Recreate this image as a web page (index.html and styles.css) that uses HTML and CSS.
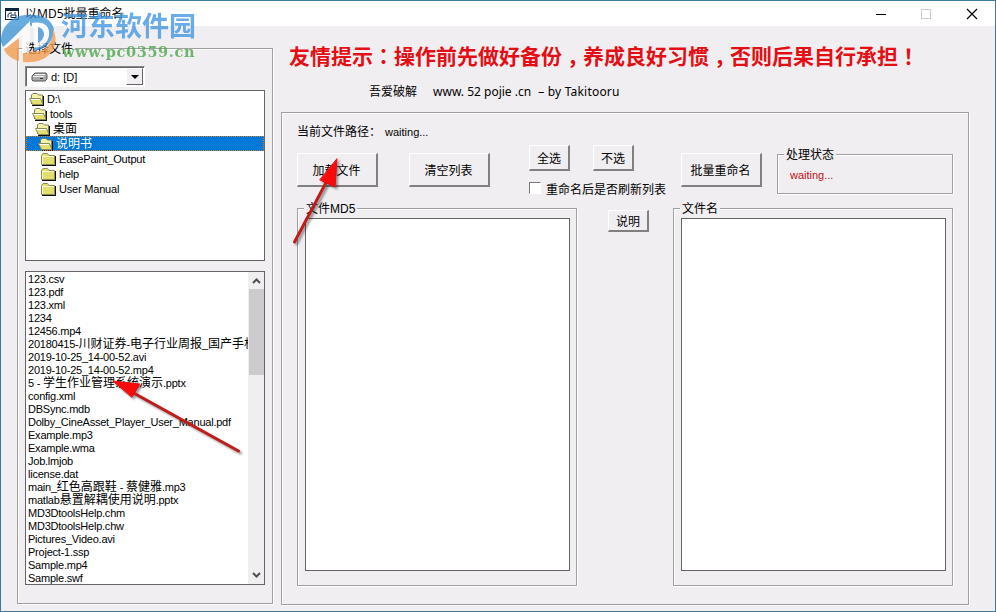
FILE: index.html
```html
<!DOCTYPE html>
<html lang="zh-CN">

<head>
    <meta charset="UTF-8">
    <meta name="viewport" content="width=device-width, initial-scale=1.0">
    <title>以MD5批量重命名</title>
    <link rel="stylesheet" href="styles.css">
</head>

<body>
    <!-- shared icons -->
    <svg class="defs" width="0" height="0">
        <symbol id="folder-open" viewBox="0 0 16 13">
            <path d="M2.500 11V2L4 .500h4L9.500 2h4V11" fill="#f5f2a8" stroke="#7c7c5c"/>
            <path d="M.500 5.500h11L14 11.500H3.500z" fill="#e4df6e" stroke="#8a8a5a"/>
            <path d="M1.500 6.500h9.500" stroke="#fff"/>
            <path d="M3 12.500h12M14.500 12V3" fill="none" stroke="#111"/>
        </symbol>
        <symbol id="folder" viewBox="0 0 16 13">
            <path d="M.500 11.500V2.500L2 .500h4.500L8 2.500h5.500v9z" fill="#e3df6c" stroke="#8a8a5a"/>
            <path d="M1.500 11V3.500h11.500" fill="none" stroke="#fbfad8"/>
            <path d="M1 12.500h14M14.500 12V3" fill="none" stroke="#111"/>
        </symbol>
    </svg>

    <div class="window">
        <div class="titlebar">
            <svg class="app-icon" width="14" height="12" viewBox="0 0 14 12">
                <rect x=".5" y=".5" width="13" height="11" fill="#fff" stroke="#0c2440"/>
                <path d="M1 2h12" stroke="#0c2440" stroke-width="2"/>
                <path d="M3 9.500V6.500L5 5h2M6 9.500V7h5v2.500zM9 5h2" fill="none" stroke="#0c2440"/>
            </svg>
            <span class="title">以MD5批量重命名</span>
            <svg class="controls" width="104" height="12" viewBox="0 0 104 12">
                <path d="M0 6.500h10" stroke="#000"/>
                <rect x="45.500" y="1.500" width="9" height="9" fill="none" stroke="#ccc"/>
                <path d="M91 1l10 10M101 1L91 11" stroke="#000" stroke-width="1.200"/>
            </svg>
        </div>

        <div class="content">
            <div class="group left">
                <div class="legend">选择文件</div>
                <div class="drive">
                    <svg width="17" height="10" viewBox="0 0 17 10">
                        <path d="M1 4l3-3h11l1 2v4l-2 2H2L1 8z" fill="#aaa" stroke="#555"/>
                        <path d="M2 4.500h11M4 2.500h10" stroke="#eee"/>
                        <path d="M9 6.500h3" stroke="#333"/>
                    </svg>
                    <span>d: [D]</span>
                    <div class="drop"></div>
                </div>
                <ul class="dirs">
                    <li class="d0"><svg><use href="#folder-open"/></svg><span>D:\</span></li>
                    <li class="d1"><svg><use href="#folder-open"/></svg><span>tools</span></li>
                    <li class="d2"><svg><use href="#folder-open"/></svg><span class="cn">桌面</span></li>
                    <li class="d3 selected"><svg><use href="#folder-open"/></svg><span class="cn">说明书</span></li>
                    <li class="d4"><svg><use href="#folder"/></svg><span>EasePaint_Output</span></li>
                    <li class="d4"><svg><use href="#folder"/></svg><span>help</span></li>
                    <li class="d4"><svg><use href="#folder"/></svg><span>User Manual</span></li>
                </ul>
                <div class="files">
                    <ul>
                        <li>123.csv</li>
                        <li>123.pdf</li>
                        <li>123.xml</li>
                        <li>1234</li>
                        <li>12456.mp4</li>
                        <li>20180415-<span class="cn">川财证券</span>-<span class="cn">电子行业周报</span>_<span class="cn">国产手机</span></li>
                        <li>2019-10-25_14-00-52.avi</li>
                        <li>2019-10-25_14-00-52.mp4</li>
                        <li>5 - <span class="cn">学生作业管理系统演示</span>.pptx</li>
                        <li>config.xml</li>
                        <li>DBSync.mdb</li>
                        <li>Dolby_CineAsset_Player_User_Manual.pdf</li>
                        <li>Example.mp3</li>
                        <li>Example.wma</li>
                        <li>Job.lmjob</li>
                        <li>license.dat</li>
                        <li>main_<span class="cn">红色高跟鞋</span> - <span class="cn">蔡健雅</span>.mp3</li>
                        <li>matlab<span class="cn">悬置解耦使用说明</span>.pptx</li>
                        <li>MD3DtoolsHelp.chm</li>
                        <li>MD3DtoolsHelp.chw</li>
                        <li>Pictures_Video.avi</li>
                        <li>Project-1.ssp</li>
                        <li>Sample.mp4</li>
                        <li>Sample.swf</li>
                    </ul>
                    <div class="scrollbar">
                        <svg width="9" height="6" viewBox="0 0 9 6"><path d="M1 5l3.500-3.500L8 5" /></svg>
                        <div class="thumb"></div>
                        <svg width="9" height="6" viewBox="0 0 9 6"><path d="M1 1l3.500 3.500L8 1" /></svg>
                    </div>
                </div>
            </div>

            <div class="main">
                <h1>友情提示<i lang="zh-TW">：</i>操作前先做好备份<span class="comma">，</span>养成良好习惯<span class="comma">，</span>否则后果自行承担<i lang="zh-TW">！</i></h1>
                <div class="credit"><span class="forum">吾爱破解</span><span class="site">www. 52 pojie .cn</span><span class="by">– by Takitooru</span></div>

                <div class="group panel">
                    <div class="path"><span>当前文件路径：</span><span class="waiting">waiting...</span></div>
                    <div class="toolbar">
                        <button class="load">加载文件</button>
                        <button class="clear">清空列表</button>
                        <div class="select">
                            <div class="pair">
                                <button>全选</button>
                                <button>不选</button>
                            </div>
                            <label><span class="check"></span>重命名后是否刷新列表</label>
                        </div>
                        <button class="rename">批量重命名</button>
                        <div class="group status">
                            <div class="legend">处理状态</div>
                            <div class="waiting">waiting...</div>
                        </div>
                    </div>
                    <div class="lists">
                        <div class="group list">
                            <div class="legend">文件MD5</div>
                            <div class="box"></div>
                        </div>
                        <button class="help">说明</button>
                        <div class="group list">
                            <div class="legend">文件名</div>
                            <div class="box"></div>
                        </div>
                    </div>
                </div>
            </div>
        </div>
    </div>

    <div class="watermark">
        <svg width="58" height="52" viewBox="0 0 58 52">
            <path d="M1 30C1 14 12 4 26 3c14-1 25 3 28 14 0 12-8 20-20 22V15l-5-2L3 35z" fill="#3b93d6"/>
            <path d="M4 37l15-11v23C12 47 6 43 4 37z" fill="#f39a4a"/>
            <path d="M23 50V24h3l3 1v14c14 3 25-6 24-22 8 16-3 36-30 33z" fill="#f39a4a"/>
            <path d="M4 35L30 9v5l-1 27h-7V23L6 36zM32 11c12-2 18 3 17 12-1 8-6 12-15 13V16h-2zM38 15v16c8-4 8-14 0-16z" fill="#fff" fill-rule="evenodd"/>
        </svg>
        <div class="brand">
            <div class="name">河东软件园</div>
            <div class="url">www.pc0359.cn</div>
        </div>
    </div>

    <svg class="arrows" width="996" height="612" viewBox="0 0 996 612">
        <path d="M294.500 242L329 177" />
        <path class="head" d="M337 159L335 187L320 180z" />
        <path d="M238.500 451L130 391" />
        <path class="head" d="M113 381L140 384L132 397z" />
    </svg>
</body>

</html>
```
FILE: styles.css
```css
* {
    box-sizing: border-box;
}

body {
    margin: 0;
    font-family: "Liberation Sans", "Noto Sans CJK SC", sans-serif;
    font-size: 12px;
    color: #000;
}

ul {
    list-style: none;
    margin: 0;
    padding: 0;
}

.defs {
    position: absolute;
}

.window {
    width: 996px;
    height: 612px;
    border: 1px solid #3a7a9c;
    background: #f0eef1;
    overflow: hidden;
}

.titlebar {
    display: flex;
    align-items: center;
    height: 25px;
    padding: 0 15px 0 4px;
    background: #fff;
}

.title {
    flex: 1;
    margin-left: 6px;
    line-height: 24px;
    font-family: "Noto Sans", "Noto Sans CJK SC", sans-serif;
}

.content {
    display: flex;
    padding-left: 16px;
}

.group {
    border: 1px solid #a0a0a0;
    box-shadow: 1px 1px 0 #fff, inset 1px 1px 0 #fff;
}

.legend {
    width: max-content;
    height: 16px;
    margin: -8px 0 0 6px;
    padding: 0 2px;
    line-height: 17px;
    background: #f0eef1;
}

/* left column */

.left {
    width: 256px;
    height: 556px;
    margin-top: 22px;
    padding: 0 7px;
}

.left > .legend {
    margin-left: -2px;
}

.drive {
    display: flex;
    align-items: center;
    width: 120px;
    height: 21px;
    margin-top: 9px;
    padding: 0 1px 0 5px;
    border: 1px solid #888;
    border-right-color: #fff;
    border-bottom-color: #fff;
    box-shadow: inset 1px 1px 0 #666;
    background: #fff;
}

.drive span {
    flex: 1;
    margin-left: 3px;
    font-size: 11px;
}

.drop {
    display: flex;
    align-items: center;
    justify-content: center;
    width: 17px;
    height: 17px;
    border: 1px solid #fff;
    border-right-color: #666;
    border-bottom-color: #666;
    background: #f0eef1;
}

.drop::after {
    content: "";
    border: 4px solid transparent;
    border-top-color: #000;
    border-bottom: 0;
}

.dirs {
    width: 240px;
    height: 171px;
    margin-top: 3px;
    border: 1px solid #646464;
    background: #fff;
}

.dirs li {
    display: flex;
    align-items: center;
    height: 15px;
    line-height: 16px;
    font-size: 11px;
    letter-spacing: -0.2px;
    white-space: nowrap;
}

.dirs svg {
    width: 16px;
    height: 13px;
    margin: 1px 2px 0 0;
}

.dirs span {
    padding-top: 1px;
}

li .cn {
    font-size: 12px;
    letter-spacing: 0;
}

.d0 {
    padding-left: 3px;
}

.d1 {
    padding-left: 6px;
}

.d2 {
    padding-left: 9px;
}

.d3 {
    padding-left: 12px;
}

.d4 {
    padding-left: 15px;
}

.dirs .selected {
    background: #0078d7;
    color: #fff;
    outline: 1px dotted #c87f30;
    outline-offset: -1px;
}

.files {
    display: flex;
    width: 240px;
    height: 314px;
    margin-top: 10px;
    border: 1px solid #646464;
    background: #fff;
}

.files ul {
    flex: 1;
    min-width: 0;
    padding: 1px 0 0 2px;
    overflow: hidden;
}

.files li {
    height: 13px;
    line-height: 13px;
    font-size: 11px;
    letter-spacing: -0.23px;
    white-space: nowrap;
}

.scrollbar {
    display: flex;
    flex-direction: column;
    align-items: center;
    width: 16px;
    padding: 6px 0;
    background: #f0eef1;
}

.scrollbar path {
    fill: none;
    stroke: #505050;
    stroke-width: 2;
}

.thumb {
    width: 15px;
    height: 86px;
    margin: 5px 0 auto;
    background: #cdcbce;
}

/* right column */

.main {
    margin-left: 8px;
}

h1 {
    height: 30px;
    margin: 14px 0 0 8px;
    line-height: 30px;
    font-family: "Noto Sans CJK SC", sans-serif;
    font-size: 21px;
    font-weight: bold;
    color: #e30f14;
    white-space: nowrap;
}

h1 i {
    font-family: "Noto Sans CJK TC", sans-serif;
    font-style: normal;
}

.comma {
    padding-left: 5px;
    margin-right: -5px;
}

.credit {
    display: flex;
    height: 20px;
    margin: 12px 0 0 88px;
    line-height: 20px;
    font-family: "Noto Sans", "Noto Sans CJK SC", sans-serif;
}

.site {
    margin-left: 16px;
}

.by {
    margin-left: 7px;
    letter-spacing: 0.2px;
}

.panel {
    width: 688px;
    height: 493px;
    margin-top: 10px;
    padding: 10px 15px 0;
}

.path {
    height: 18px;
    line-height: 19px;
}

.path .waiting {
    margin-left: 4px;
}

.waiting {
    font-size: 11px;
}

.toolbar {
    display: flex;
    height: 63px;
    margin-top: 4px;
}

button {
    padding: 0;
    border: 1px solid #fff;
    border-right: 2px solid #808080;
    border-bottom: 2px solid #808080;
    background: #f0eef1;
    font: inherit;
    color: #000;
}

.load,
.clear,
.rename {
    width: 81px;
    height: 34px;
    margin-top: 8px;
    padding-right: 1px;
}

.clear {
    margin-left: 31px;
}

.select {
    width: 140px;
    margin-left: 39px;
}

.pair {
    display: flex;
    gap: 23px;
}

.pair button {
    width: 41px;
    height: 26px;
}

.select label {
    display: flex;
    align-items: center;
    height: 18px;
    margin-top: 8px;
    white-space: nowrap;
}

.check {
    width: 12px;
    height: 12px;
    margin-right: 5px;
    border: 1px solid #777;
    border-right-color: #fff;
    border-bottom-color: #fff;
    background: #fff;
}

.rename {
    margin-left: 12px;
}

.status {
    width: 176px;
    height: 40px;
    margin: 9px 0 0 15px;
}

.status .waiting {
    margin: 6px 0 0 12px;
    color: #c01018;
}

.lists {
    display: flex;
    align-items: flex-start;
}

.list {
    width: 280px;
    height: 378px;
    padding: 0 6px 0 7px;
}

.list .legend {
    margin-left: -1px;
}

.list .box {
    width: 265px;
    height: 353px;
    margin-top: 1px;
    border: 1px solid #646464;
    background: #fff;
}

.help {
    width: 41px;
    height: 22px;
    margin: 2px 24px 0 31px;
}

/* overlays */

.watermark {
    position: absolute;
    left: 0;
    top: 12px;
    display: flex;
    opacity: 0.76;
}

.name {
    margin: -3px 0 0 3px;
    height: 32px;
    line-height: 32px;
    font-family: "Noto Sans CJK SC", sans-serif;
    font-size: 27px;
    font-weight: bold;
    color: #3b93e0;
}

.url {
    margin-left: 4px;
    line-height: 22px;
    font-family: "DejaVu Serif", serif;
    font-size: 14.5px;
    font-weight: bold;
    letter-spacing: 0.65px;
    color: #46a546;
}

.arrows {
    position: absolute;
    left: 0;
    top: 0;
    pointer-events: none;
    filter: drop-shadow(2px 2px 1px rgba(0, 0, 0, 0.4));
}

.arrows path {
    fill: none;
    stroke: #c01c1c;
    stroke-width: 3;
    stroke-linecap: round;
}

.arrows .head {
    fill: #fa0a0a;
    stroke: #e01010;
    stroke-width: 1;
}
```
